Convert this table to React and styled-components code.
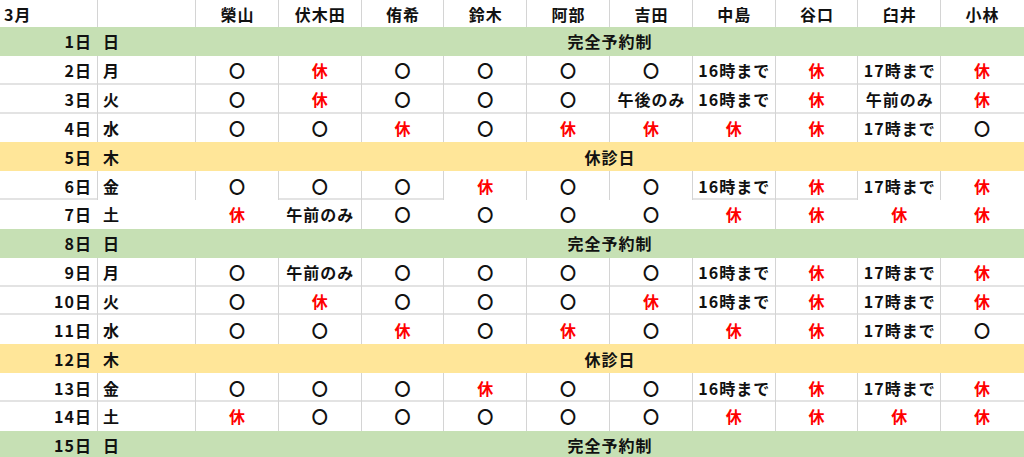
import React from "react";
import styled, { createGlobalStyle } from "styled-components";

const Global = createGlobalStyle`
  html, body { margin: 0; padding: 0; background: #fff; }
  body { font-family: "Noto Sans CJK JP", "Noto Sans", sans-serif; }
`;

const Sheet = styled.div`
  width: 1024px;
  height: 457px;
  overflow: hidden;
  display: grid;
  grid-template-rows: 27px repeat(15, 28.85px);
  background: #fff;
  font-family: "Noto Sans CJK JP", "Noto Sans", sans-serif;
  font-size: 16px;
  font-weight: 700;
  letter-spacing: 1px;
  color: #111;
`;

const Row = styled.div`
  display: grid;
  grid-template-columns: 98px 98px repeat(10, 1fr);
  background: ${(p) => p.$fill || "#fff"};
`;

const VLINE = "inset -1px 0 0 0 #d4d4d4";
const HLINE = "inset 0 -2px 0 0 #e3e3e3";

const Cell = styled.div`
  display: flex;
  align-items: center;
  justify-content: ${(p) => p.$align || "center"};
  padding: ${(p) => p.$pad || "0"};
  white-space: nowrap;
  overflow: hidden;
  color: ${(p) => (p.$off ? "#ff0000" : "#111")};
  box-shadow: ${(p) =>
    [p.$v && VLINE, p.$h && HLINE].filter(Boolean).join(", ") || "none"};
`;

const Merged = styled.div`
  grid-column: span 10;
  display: flex;
  align-items: center;
  justify-content: center;
`;

const NAMES = ["榮山", "伏木田", "侑希", "鈴木", "阿部", "吉田", "中島", "谷口", "臼井", "小林"];

const GREEN = "#c6e0b4";
const YELLOW = "#ffe699";

const O = "〇";
const K = "休";

const ROWS = [
  { d: "1日", w: "日", fill: GREEN, label: "完全予約制" },
  { d: "2日", w: "月", c: [O, K, O, O, O, O, "16時まで", K, "17時まで", K] },
  { d: "3日", w: "火", c: [O, K, O, O, O, "午後のみ", "16時まで", K, "午前のみ", K] },
  { d: "4日", w: "水", c: [O, O, K, O, K, K, K, K, "17時まで", O] },
  { d: "5日", w: "木", fill: YELLOW, label: "休診日" },
  {
    d: "6日", w: "金", c: [O, O, O, K, O, O, "16時まで", K, "17時まで", K],
    hOnly: [0, 3, 4, 8, 9],
  },
  {
    d: "7日", w: "土", c: [K, "午前のみ", O, O, O, O, K, K, K, K],
    vOnly: [3, 8],
  },
  { d: "8日", w: "日", fill: GREEN, label: "完全予約制" },
  { d: "9日", w: "月", c: [O, "午前のみ", O, O, O, O, "16時まで", K, "17時まで", K] },
  { d: "10日", w: "火", c: [O, K, O, O, O, K, "16時まで", K, "17時まで", K] },
  { d: "11日", w: "水", c: [O, O, K, O, K, O, K, K, "17時まで", O] },
  { d: "12日", w: "木", fill: YELLOW, label: "休診日" },
  { d: "13日", w: "金", c: [O, O, O, K, O, O, "16時まで", K, "17時まで", K] },
  { d: "14日", w: "土", c: [K, O, O, O, O, O, K, K, K, K] },
  { d: "15日", w: "日", fill: GREEN, label: "完全予約制" },
];

function HeaderRow() {
  return (
    <Row>
      <Cell $align="flex-start" $pad="0 0 0 4px" $v>3月</Cell>
      <Cell $v />
      {NAMES.map((n, i) => (
        <Cell key={n} $v={i < NAMES.length - 1}>{n}</Cell>
      ))}
    </Row>
  );
}

function SpecialRow({ row }) {
  return (
    <Row $fill={row.fill}>
      <Cell $align="flex-end" $pad="0 6px 0 0">{row.d}</Cell>
      <Cell $align="flex-start" $pad="0 0 0 5px">{row.w}</Cell>
      <Merged>{row.label}</Merged>
    </Row>
  );
}

function DataRow({ row, nextSpecial }) {
  const hasV = (i) => {
    if (i === 11) return false;
    if (row.vOnly) return row.vOnly.includes(i);
    return true;
  };
  const hasH = (i) => {
    if (nextSpecial) return false;
    if (row.hOnly) return row.hOnly.includes(i);
    return true;
  };
  return (
    <Row>
      <Cell $align="flex-end" $pad="0 6px 0 0" $v={hasV(0)} $h={hasH(0)}>{row.d}</Cell>
      <Cell $align="flex-start" $pad="0 0 0 5px" $v={hasV(1)} $h={hasH(1)}>{row.w}</Cell>
      {row.c.map((val, j) => (
        <Cell key={j} $off={val === K} $v={hasV(j + 2)} $h={hasH(j + 2)}>
          {val}
        </Cell>
      ))}
    </Row>
  );
}

export default function App() {
  return (
    <>
      <Global />
      <Sheet>
        <HeaderRow />
        {ROWS.map((row, i) => {
          const next = ROWS[i + 1];
          const nextSpecial = !next || !!next.label;
          return row.label ? (
            <SpecialRow key={row.d} row={row} />
          ) : (
            <DataRow key={row.d} row={row} nextSpecial={nextSpecial} />
          );
        })}
      </Sheet>
    </>
  );
}
